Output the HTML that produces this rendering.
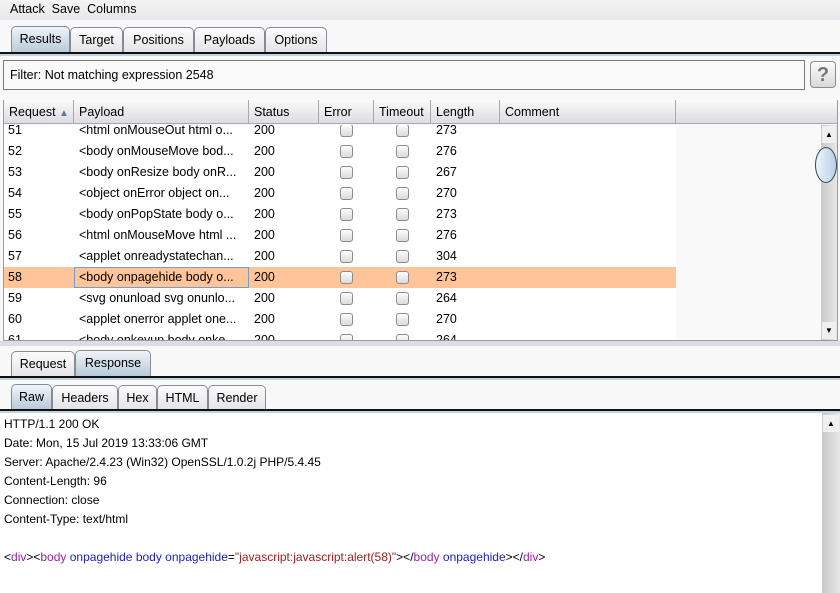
<!DOCTYPE html>
<html><head><meta charset="utf-8"><style>
*{box-sizing:border-box;margin:0;padding:0}
body{width:840px;height:593px;overflow:hidden;background:#f8f8f8;font-family:"Liberation Sans",Arial,sans-serif;font-size:12.5px;color:#000;position:relative}
.a{position:absolute}
.tab{position:absolute;border:1px solid #8a8a94;border-bottom:none;border-radius:5px 5px 0 0;background:linear-gradient(#fcfcfc,#e4e4e8);text-align:center;line-height:25px}
.tab.s{background:linear-gradient(#f0f4f8,#b6c8d8);}
.line{position:absolute;left:0;width:840px;height:4px;border-top:2px solid #111;background:#c4d2e0}
.hd{position:absolute;top:100px;height:24px;line-height:24px;padding-left:5px;background:linear-gradient(#fafafa,#dcdce2);border-right:1px solid #a8a8b0;border-bottom:1px solid #a8a8b0}
.row{position:absolute;left:4px;width:672px;height:21px;line-height:21px;background:#fff}
.row span{position:absolute}
.cb{position:absolute;width:13px;height:13px;top:4px;border:1px solid #8c8c8c;border-radius:3px;background:linear-gradient(#fdfdfd,#dadada)}
.txt div{height:19px;line-height:19px}
</style></head><body>
<div class="a" style="left:0;top:0;width:840px;height:20px;background:linear-gradient(#f4f4f4,#e8e8ec)"></div>
<div class="a" style="left:10px;top:1px;line-height:16px">Attack&nbsp; Save&nbsp; Columns</div>
<div class="tab s" style="left:11px;top:26px;width:59px;height:27px">Results</div>
<div class="tab" style="left:70px;top:27px;width:53px;height:26px">Target</div>
<div class="tab" style="left:123px;top:27px;width:71px;height:26px">Positions</div>
<div class="tab" style="left:194px;top:27px;width:71px;height:26px">Payloads</div>
<div class="tab" style="left:265px;top:27px;width:62px;height:26px">Options</div>
<div class="line" style="top:52px"></div>
<div class="a" style="left:3px;top:60px;width:802px;height:30px;border:1px solid #7a7a7a;background:#fafafa;line-height:28px;padding-left:6px">Filter: Not matching expression 2548</div>
<div class="a" style="left:810px;top:61px;width:26px;height:27px;border:1px solid #8c8c8c;border-radius:4px;background:linear-gradient(#fbfbfb,#dadada);text-align:center;font-size:20px;line-height:26px;color:#777;font-weight:bold">?</div>
<div class="a" style="left:3px;top:100px;width:835px;height:241px;border:1px solid #9a9aa2;background:#f9f9f9"></div>
<div class="hd" style="left:4px;width:70px">Request <span style="color:#5a7aa0;font-size:10px">▲</span></div>
<div class="hd" style="left:74px;width:175px">Payload</div>
<div class="hd" style="left:249px;width:70px">Status</div>
<div class="hd" style="left:319px;width:55px">Error</div>
<div class="hd" style="left:374px;width:57px">Timeout</div>
<div class="hd" style="left:431px;width:69px">Length</div>
<div class="hd" style="left:500px;width:176px">Comment</div>
<div class="hd" style="left:676px;width:161px;border-right:none"></div>
<div class="a" style="left:4px;top:125px;width:817px;height:215px;overflow:hidden">
<div style="position:relative;top:-125px">
<div class="row" style="top:120px;left:0"><span style="left:4px">51</span><span style="left:75px">&lt;html onMouseOut html o...</span><span style="left:250px">200</span><div class="cb" style="left:336px"></div><div class="cb" style="left:392px"></div><span style="left:432px">273</span></div>
<div class="row" style="top:141px;left:0"><span style="left:4px">52</span><span style="left:75px">&lt;body onMouseMove bod...</span><span style="left:250px">200</span><div class="cb" style="left:336px"></div><div class="cb" style="left:392px"></div><span style="left:432px">276</span></div>
<div class="row" style="top:162px;left:0"><span style="left:4px">53</span><span style="left:75px">&lt;body onResize body onR...</span><span style="left:250px">200</span><div class="cb" style="left:336px"></div><div class="cb" style="left:392px"></div><span style="left:432px">267</span></div>
<div class="row" style="top:183px;left:0"><span style="left:4px">54</span><span style="left:75px">&lt;object onError object on...</span><span style="left:250px">200</span><div class="cb" style="left:336px"></div><div class="cb" style="left:392px"></div><span style="left:432px">270</span></div>
<div class="row" style="top:204px;left:0"><span style="left:4px">55</span><span style="left:75px">&lt;body onPopState body o...</span><span style="left:250px">200</span><div class="cb" style="left:336px"></div><div class="cb" style="left:392px"></div><span style="left:432px">273</span></div>
<div class="row" style="top:225px;left:0"><span style="left:4px">56</span><span style="left:75px">&lt;html onMouseMove html ...</span><span style="left:250px">200</span><div class="cb" style="left:336px"></div><div class="cb" style="left:392px"></div><span style="left:432px">276</span></div>
<div class="row" style="top:246px;left:0"><span style="left:4px">57</span><span style="left:75px">&lt;applet onreadystatechan...</span><span style="left:250px">200</span><div class="cb" style="left:336px"></div><div class="cb" style="left:392px"></div><span style="left:432px">304</span></div>
<div class="row" style="top:267px;left:0;background:#ffc598"><span style="left:4px">58</span><span style="left:70px;top:0;width:175px;height:21px;border:1px solid #7a9cc4;padding-left:4px;line-height:19px">&lt;body onpagehide body o...</span><span style="left:250px">200</span><div class="cb" style="left:336px"></div><div class="cb" style="left:392px"></div><span style="left:432px">273</span></div>
<div class="row" style="top:288px;left:0"><span style="left:4px">59</span><span style="left:75px">&lt;svg onunload svg onunlo...</span><span style="left:250px">200</span><div class="cb" style="left:336px"></div><div class="cb" style="left:392px"></div><span style="left:432px">264</span></div>
<div class="row" style="top:309px;left:0"><span style="left:4px">60</span><span style="left:75px">&lt;applet onerror applet one...</span><span style="left:250px">200</span><div class="cb" style="left:336px"></div><div class="cb" style="left:392px"></div><span style="left:432px">270</span></div>
<div class="row" style="top:330px;left:0"><span style="left:4px">61</span><span style="left:75px">&lt;body onkeyup body onke...</span><span style="left:250px">200</span><div class="cb" style="left:336px"></div><div class="cb" style="left:392px"></div><span style="left:432px">264</span></div>
</div></div>
<div class="a" style="left:821px;top:125px;width:16px;height:215px;background:linear-gradient(90deg,#c8c8c8,#e8e8e8)"></div>
<div class="a" style="left:822px;top:126px;width:14px;height:17px;background:#f0f0f0;font-size:8px;text-align:center;line-height:17px">▲</div>
<div class="a" style="left:815px;top:147px;width:22px;height:36px;border:1.5px solid #345;border-radius:50%;background:linear-gradient(90deg,#eef4fa,#b8d0e8)"></div>
<div class="a" style="left:822px;top:322px;width:14px;height:17px;background:#f0f0f0;font-size:8px;text-align:center;line-height:17px">▼</div>
<div class="a" style="left:0;top:341px;width:840px;height:5px;background:#dcdce4"></div>
<div class="tab" style="left:11px;top:351px;width:64px;height:26px">Request</div>
<div class="tab s" style="left:75px;top:350px;width:76px;height:27px">Response</div>
<div class="line" style="top:376px"></div>
<div class="tab s" style="left:11px;top:384px;width:41px;height:26px">Raw</div>
<div class="tab" style="left:52px;top:385px;width:66px;height:25px">Headers</div>
<div class="tab" style="left:118px;top:385px;width:39px;height:25px">Hex</div>
<div class="tab" style="left:157px;top:385px;width:51px;height:25px">HTML</div>
<div class="tab" style="left:208px;top:385px;width:58px;height:25px">Render</div>
<div class="line" style="top:409px"></div>
<div class="a" style="left:0;top:413px;width:822px;height:180px;background:#fff"></div>
<div class="a" style="left:822px;top:413px;width:18px;height:180px;background:linear-gradient(90deg,#c8c8c8,#e8e8e8)"></div>
<div class="a" style="left:823px;top:415px;width:16px;height:17px;background:#f0f0f0;font-size:8px;text-align:center;line-height:17px">▲</div>
<div class="a txt" style="left:4px;top:415px;font-size:12px">
<div>HTTP/1.1 200 OK</div>
<div>Date: Mon, 15 Jul 2019 13:33:06 GMT</div>
<div>Server: Apache/2.4.23 (Win32) OpenSSL/1.0.2j PHP/5.4.45</div>
<div>Content-Length: 96</div>
<div>Connection: close</div>
<div>Content-Type: text/html</div>
<div></div>
<div>&lt;<span style="color:#a020a0">div</span>&gt;&lt;<span style="color:#a020a0">body</span> <span style="color:#2020c0">onpagehide body onpagehide</span>=<span style="color:#a02020">"javascript:javascript:alert(58)"</span>&gt;&lt;/<span style="color:#a020a0">body</span> <span style="color:#2020c0">onpagehide</span>&gt;&lt;/<span style="color:#a020a0">div</span>&gt;</div>
</div>
</body></html>
